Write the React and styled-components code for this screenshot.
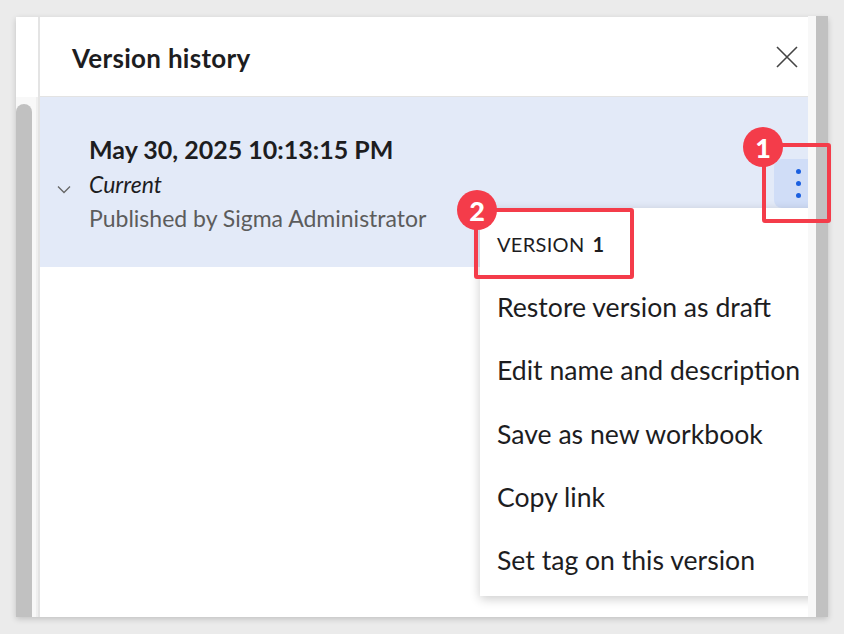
import React from 'react';
import styled, { createGlobalStyle } from 'styled-components';

const GlobalStyle = createGlobalStyle`
  body {
    margin: 0;
    background: #ebebeb;
    font-family: Lato, "Noto Sans", sans-serif;
    color: #1d1d1f;
  }
`;

const Page = styled.div`
  position: relative;
  width: 844px;
  height: 634px;
  padding: 17px 0 0 16px;
  box-sizing: border-box;
`;

const Panel = styled.div`
  display: flex;
  width: 812px;
  height: 600px;
  background: #fff;
  box-shadow: 0 2px 6px rgba(0, 0, 0, 0.18);
`;

const LeftRail = styled.div`
  display: flex;
  flex-direction: column;
  width: 22px;
  border-right: 2px solid #e4e4e4;
`;

const RailHead = styled.div`
  height: 80px;
  background: #fff;
`;

const RailTrack = styled.div`
  flex: 1;
  background: #f8f8f8;
  padding-top: 7px;
  box-shadow: inset -2px 0 0 #efefef;
`;

const Thumb = styled.div`
  width: 16px;
  height: 100%;
  background: #c1c1c1;
  border-radius: 8px 8px 0 0;
`;

const Main = styled.div`
  position: relative;
  flex: 1;
  overflow: hidden;
`;

const Header = styled.div`
  display: flex;
  align-items: center;
  justify-content: space-between;
  height: 80px;
  padding: 3px 10px 0 32px;
  box-sizing: border-box;
  border-bottom: 1px solid #e3e3e3;
`;

const Title = styled.h2`
  margin: 0;
  font-size: 26px;
  font-weight: 700;
  letter-spacing: 0.3px;
`;

const CloseButton = styled.button`
  display: flex;
  margin-top: -3px;
  padding: 0;
  border: 0;
  background: none;
  color: #444;
`;

const VersionRow = styled.div`
  display: flex;
  align-items: flex-start;
  height: 170px;
  padding: 34px 0 0 17px;
  box-sizing: border-box;
  background: #e3eaf8;
`;

const Chevron = styled.div`
  width: 32px;
  padding-top: 47px;
  color: #666;
`;

const Info = styled.div`
  flex: 1;
`;

const Line = styled.div`
  font-size: ${p => p.$size || 23}px;
  line-height: ${p => p.$lh || 34}px;
  font-weight: ${p => (p.$bold ? 700 : 400)};
  font-style: ${p => (p.$italic ? 'italic' : 'normal')};
  color: ${p => p.$color || '#1d1d1f'};
`;

const Kebab = styled.div`
  display: flex;
  flex-direction: column;
  align-items: center;
  justify-content: center;
  gap: 7px;
  width: 34px;
  height: 49px;
  margin-top: 28px;
  padding-left: 14px;
  box-sizing: border-box;
  background: #d0ddf7;
  border-radius: 8px 0 0 8px;
`;

const Dot = styled.span`
  width: 5px;
  height: 5px;
  border-radius: 50%;
  background: #1a5fe0;
`;

const Menu = styled.ul`
  position: absolute;
  left: 440px;
  top: 191px;
  width: 360px;
  margin: 0;
  padding: 4px 0;
  list-style: none;
  background: #fff;
  box-shadow: 0 3px 10px rgba(0, 0, 0, 0.2);
`;

const MenuItem = styled.li`
  display: flex;
  align-items: center;
  gap: 8px;
  height: 63.3px;
  padding-left: 17px;
  font-size: ${p => (p.$label ? 20 : 26.6)}px;
  letter-spacing: ${p => (p.$label ? 0.3 : 0)}px;
  white-space: nowrap;
`;

const Strong = styled.b`
  font-weight: 700;
`;

const RightRail = styled.div`
  width: 8px;
  margin-top: -1px;
  background: #f8f8f8;
`;

const RightThumb = styled.div`
  width: 12px;
  margin-top: -1px;
  background: #c1c1c1;
`;

const Mark = styled.div`
  position: absolute;
  left: ${p => p.$x}px;
  top: ${p => p.$y}px;
  width: ${p => p.$w}px;
  height: ${p => p.$h}px;
  border: 4px solid #f43c4a;
  border-radius: 3px;
  box-sizing: border-box;
`;

const Badge = styled.div`
  position: absolute;
  left: ${p => p.$x - 20}px;
  top: ${p => p.$y - 20}px;
  width: 40px;
  height: 40px;
  border-radius: 50%;
  background: #f43c4a;
  color: #fff;
  font-size: 27px;
  font-weight: 900;
  display: flex;
  align-items: center;
  justify-content: center;
`;

const menuItems = [
  'Restore version as draft',
  'Edit name and description',
  'Save as new workbook',
  'Copy link',
  'Set tag on this version',
];

export default function App() {
  return (
    <Page>
      <GlobalStyle />
      <Panel>
        <LeftRail>
          <RailHead />
          <RailTrack>
            <Thumb />
          </RailTrack>
        </LeftRail>
        <Main>
          <Header>
            <Title>Version history</Title>
            <CloseButton>
              <svg width="22" height="22" viewBox="0 0 22 22">
                <path d="M1 1L21 21M21 1L1 21" stroke="currentColor" strokeWidth="1.6" />
              </svg>
            </CloseButton>
          </Header>
          <VersionRow>
            <Chevron>
              <svg width="14" height="9" viewBox="0 0 14 9">
                <path d="M1 1.5L7 7.5L13 1.5" fill="none" stroke="currentColor" strokeWidth="1.3" />
              </svg>
            </Chevron>
            <Info>
              <Line $size={25} $lh={36} $bold>May 30, 2025 10:13:15 PM</Line>
              <Line $italic>Current</Line>
              <Line $color="#5c5c5c">Published by Sigma Administrator</Line>
            </Info>
            <Kebab>
              <Dot />
              <Dot />
              <Dot />
            </Kebab>
          </VersionRow>
          <Menu>
            <MenuItem $label>
              VERSION <Strong>1</Strong>
            </MenuItem>
            {menuItems.map(item => (
              <MenuItem key={item}>{item}</MenuItem>
            ))}
          </Menu>
        </Main>
        <RightRail />
        <RightThumb />
      </Panel>
      <Mark $x={762} $y={143} $w={69} $h={80} />
      <Mark $x={474} $y={208} $w={160} $h={71} />
      <Badge $x={763} $y={147}>1</Badge>
      <Badge $x={477} $y={210}>2</Badge>
    </Page>
  );
}
